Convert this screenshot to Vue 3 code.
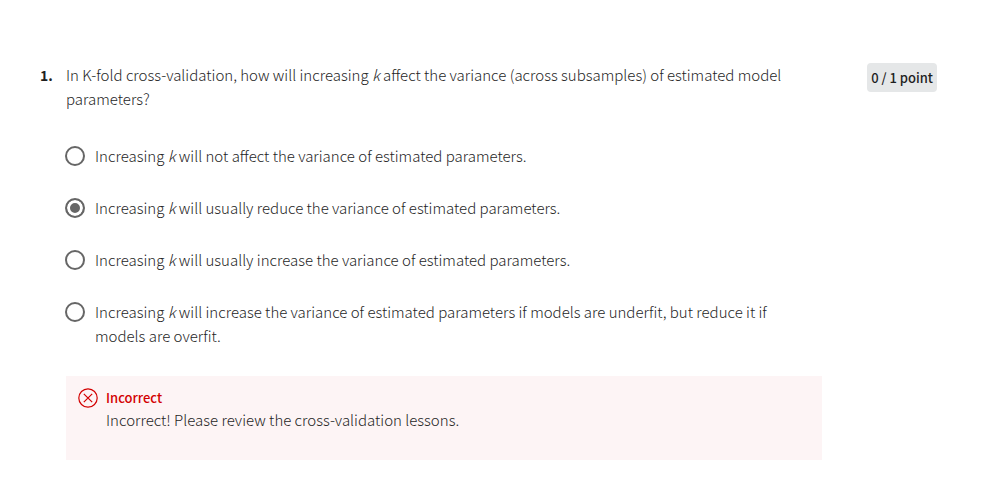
<script setup>
import { ref } from 'vue'

const selected = ref(1)
const options = [
  'will not affect the variance of estimated parameters.',
  'will usually reduce the variance of estimated parameters.',
  'will usually increase the variance of estimated parameters.',
  'will increase the variance of estimated parameters if models are underfit, but reduce it if models are overfit.',
]
</script>

<template>
  <main class="quiz">
    <span class="number">1.</span>
    <section class="question">
      <p id="prompt" class="prompt">
        In K-fold cross-validation, how will increasing <em>k</em> affect the variance (across subsamples) of estimated model parameters?
      </p>
      <div class="options" role="radiogroup" aria-labelledby="prompt">
        <label v-for="(text, i) in options" :key="i" class="option">
          <input v-model="selected" class="radio" type="radio" name="answer" :value="i" />
          <span>Increasing <em>k</em> {{ text }}</span>
        </label>
      </div>
      <div class="feedback">
        <svg class="icon" viewBox="0 0 20 20" width="20" height="20" aria-hidden="true">
          <circle cx="10" cy="10" r="9.2" />
          <path d="M5.8 5.8l8.4 8.4M14.2 5.8l-8.4 8.4" />
        </svg>
        <div>
          <strong class="verdict">Incorrect</strong>
          <p class="note">Incorrect! Please review the cross-validation lessons.</p>
        </div>
      </div>
    </section>
    <span class="points">0 / 1 point</span>
  </main>
</template>

<style>
body {
  margin: 0;
  background: #fff;
}
</style>

<style scoped>
.quiz {
  display: grid;
  grid-template-columns: 26px minmax(0, 1fr) 115px;
  align-items: start;
  padding: 63px 71px 26px 40px;
  color: #1f1f1f;
  font-family: "Noto Sans CJK SC", "Noto Sans", sans-serif;
  font-size: 15px;
  font-weight: 300;
  line-height: 24px;
}
.number {
  font-size: 14px;
  font-weight: 700;
}
.prompt {
  margin: 0;
  padding-right: 36px;
}
.options {
  display: flex;
  flex-direction: column;
  gap: 28px;
  margin-top: 33px;
}
.option {
  display: flex;
  align-items: flex-start;
  gap: 10px;
  padding-right: 36px;
  cursor: pointer;
}
.radio {
  appearance: none;
  box-sizing: border-box;
  flex: none;
  width: 20px;
  height: 20px;
  margin: 2px 0 0 -1px;
  border: 2px solid #666;
  border-radius: 50%;
  background: #fff;
}
.radio:checked {
  background: #666;
  box-shadow: inset 0 0 0 3px #fff;
}
.feedback {
  display: flex;
  gap: 8px;
  margin-top: 28px;
  padding: 12px 12px 28px;
  background: #fdf4f5;
}
.icon {
  flex: none;
  fill: none;
  stroke: #d30001;
  stroke-width: 1.2;
}
.verdict {
  display: block;
  font-size: 13px;
  font-weight: 500;
  line-height: 20px;
  color: #d30001;
}
.note {
  margin: 0;
}
.points {
  justify-self: end;
  padding: 3px 4px 2px;
  border-radius: 4px;
  background: #e5e7e8;
  font-size: 13px;
  font-weight: 500;
  white-space: nowrap;
}
</style>
